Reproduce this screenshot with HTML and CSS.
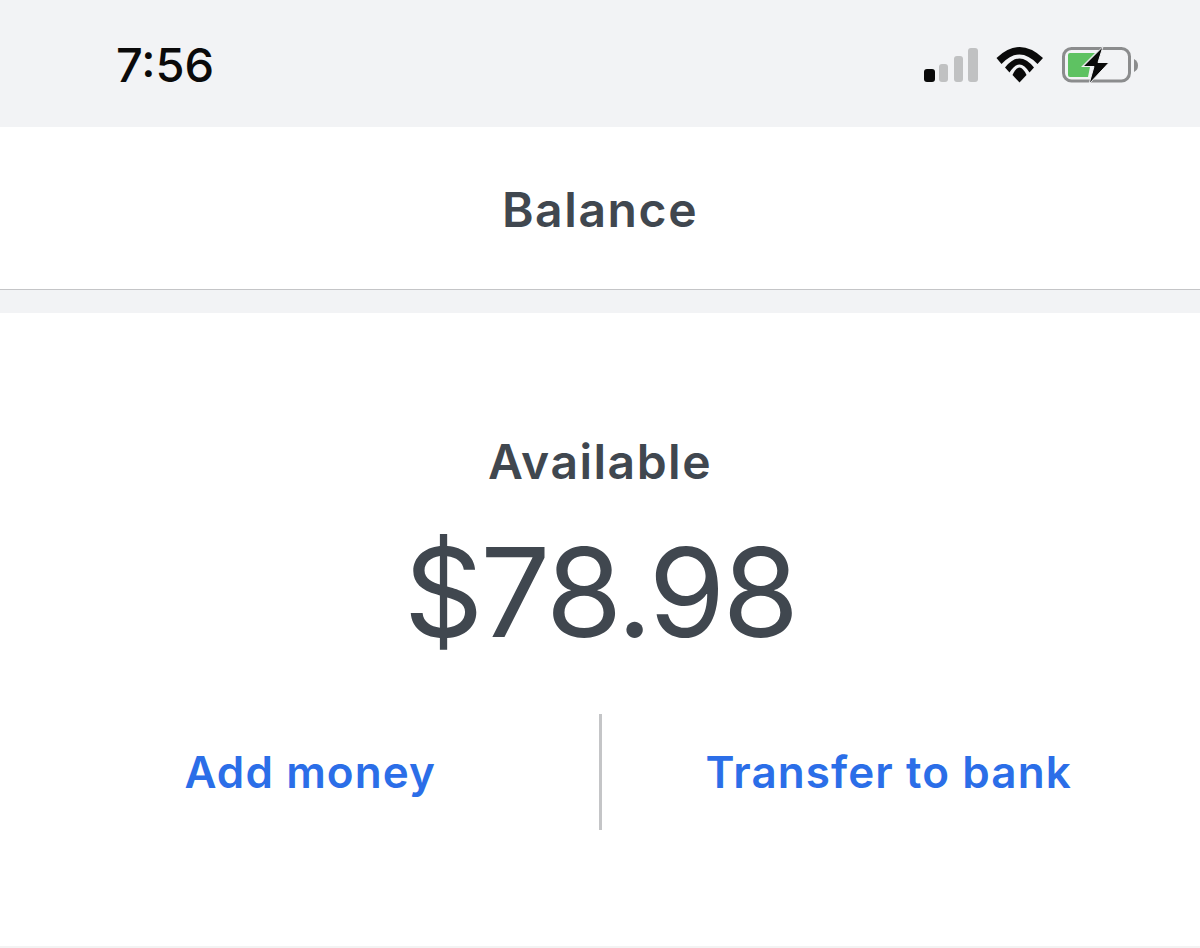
FILE: index.html
```html
<!DOCTYPE html>
<html lang="en">
<head>
  <meta charset="UTF-8">
  <meta name="viewport" content="width=device-width, initial-scale=1.0">
  <title>Balance</title>
  <link rel="stylesheet" href="styles.css">
</head>
<body>
  <div class="status-bar">
    <span class="clock">7:56</span>
    <div class="status-icons">
      <svg class="signal" width="56" height="38" viewBox="0 0 56 38">
        <rect x="1" y="23" width="11" height="13" rx="3" fill="#0a0a0a"/>
        <rect x="16" y="18" width="9" height="18" rx="3" fill="#c0c1c2"/>
        <rect x="31" y="10" width="9" height="26" rx="3" fill="#c0c1c2"/>
        <rect x="45" y="2" width="10" height="34" rx="3" fill="#c0c1c2"/>
      </svg>
      <svg class="wifi" width="49" height="38" viewBox="0 0 49 38">
        <path d="M0.500 12 Q23.500 -10 47 12 L41.500 18 Q23.500 -1 5.500 18 Z" fill="#0a0a0a"/>
        <path d="M9 21.500 Q23.500 3.500 38 21.500 L33.500 26.500 Q23.500 10.500 13.500 26.500 Z" fill="#0a0a0a"/>
        <path d="M16.500 29 Q23.500 14 30.500 29 L23.500 36.500 Z" fill="#0a0a0a"/>
      </svg>
      <svg class="battery" width="78" height="38" viewBox="0 0 78 38">
        <rect x="1.500" y="2.500" width="66" height="32.500" rx="8" fill="none" stroke="#8b8c8d" stroke-width="3"/>
        <path d="M6 9 Q6 7 8 7 H33 L19 21 H28 L26 31 H8 Q6 31 6 29 Z" fill="#5ec262"/>
        <path d="M41 0.500 L21 20.500 H32 L27 38 L47 16.500 H36 Z" fill="#0a0a0a" stroke="#f2f3f5" stroke-width="1"/>
        <path d="M72 13 Q76 15 76 19.500 Q76 24 72 26 Z" fill="#8b8c8d"/>
      </svg>
    </div>
  </div>

  <div class="page-title">Balance</div>
  <div class="spacer"></div>

  <div class="balance-card">
    <div class="balance-label">Available</div>
    <div class="balance-amount">$78.98</div>
    <div class="balance-actions">
      <a class="action action-left">Add money</a>
      <span class="divider"></span>
      <a class="action action-right">Transfer to bank</a>
    </div>
  </div>
</body>
</html>
```

FILE: styles.css
```css
body {
  font-family: Inter, "Liberation Sans", sans-serif;
  background-color: #ffffff;
  margin: 0;
  padding: 0;
  height: 948px;
  overflow: hidden;
}

.status-bar {
  height: 127px;
  background: #f2f3f5;
  padding: 0 60px 0 116px;
  display: flex;
  justify-content: space-between;
  align-items: center;
}

.clock {
  font-size: 47px;
  font-weight: 550;
  color: #0a0a0a;
  margin-top: 2px;
}

.status-icons {
  display: flex;
  align-items: center;
  gap: 17px;
  padding-top: 3px;
}

.page-title {
  height: 163px;
  display: flex;
  align-items: center;
  justify-content: center;
  padding-top: 2px;
  box-sizing: border-box;
  font-size: 48px;
  font-weight: 600;
  letter-spacing: 1.600px;
  color: #40474f;
  border-bottom: 1px solid #c4c5c7;
}

.spacer {
  height: 23px;
  background: #f2f3f5;
}

.balance-card {
  height: 514px;
  border-bottom: 3px solid #f3f3f3;
  display: flex;
  flex-direction: column;
  align-items: center;
  padding-top: 119px;
}

.balance-label {
  font-size: 48px;
  font-weight: 600;
  letter-spacing: 1.500px;
  line-height: 60px;
  color: #40474f;
}

.balance-amount {
  font-size: 124px;
  font-weight: 400;
  letter-spacing: -3px;
  line-height: 150px;
  margin-top: 25px;
  color: #40474f;
}

.balance-actions {
  width: 100%;
  margin-top: 47px;
  display: grid;
  grid-template-columns: 1fr 3px 1fr;
}

.divider {
  background: #c4c5c7;
}

.action {
  height: 116px;
  display: flex;
  align-items: center;
  justify-content: center;
  font-size: 44px;
  font-weight: 600;
  letter-spacing: 1.100px;
  color: #2b6ee8;
}

.action-left {
  padding-left: 22px;
}

.action-right {
  padding-right: 24px;
}
```
